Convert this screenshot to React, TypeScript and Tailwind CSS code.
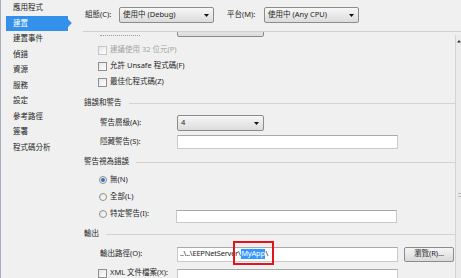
import React from "react";

const NAV = ["應用程式", "建置", "建置事件", "偵錯", "資源", "服務", "設定", "參考路徑", "簽署", "程式碼分析"];

const Arrow = () => (
    <svg width="5" height="3" viewBox="0 0 5 3" className="shrink-0">
        <path d="M0 0H5L2.5 3Z" fill="#111" />
    </svg>
);

const Select = ({ text, w }: { text: string; w: string }) => (
    <div className={`${w} flex h-[16px] items-center justify-between rounded-[2px] border border-[#8c8c8c] bg-linear-to-b from-[#f7f7f7] to-[#dcdcdc] pl-[3px] pr-[4px]`}>
        <span>{text}</span>
        <Arrow />
    </div>
);

const TextBox = ({ children, h = "h-[14px]" }: { children?: React.ReactNode; h?: string }) => (
    <div className={`${h} flex w-[221px] items-center border border-[#cacaca] border-t-[#a9a9a9] bg-white pl-[2px]`}>
        {children}
    </div>
);

const Check = ({ disabled }: { disabled?: boolean }) => (
    <span
        className={`inline-block h-[9px] w-[9px] shrink-0 border bg-linear-to-br from-[#e6e6e6] to-white ${
            disabled ? "border-[#c6c6c6]" : "border-[#8e8f8f]"
        }`}
    />
);

const Radio = ({ on }: { on?: boolean }) => (
    <span className="flex h-[8px] w-[8px] shrink-0 items-center justify-center rounded-full border border-[#8e8f8f] bg-linear-to-br from-[#e2e2e2] to-white">
        {on && <span className="h-[4px] w-[4px] rounded-full bg-[#2f6fbf]" />}
    </span>
);

const Section = ({ title, className }: { title: string; className: string }) => (
    <div className={`flex h-[16px] items-center gap-[7px] ${className}`}>
        <span>{title}</span>
        <div className="h-px flex-1 bg-[#d2d2d2]" />
    </div>
);

export default function App() {
    return (
        <div className="flex h-[278px] w-[461px] overflow-hidden border-l border-[#a9adc2] bg-[#f0f0f0] font-['Noto_Sans','Noto_Sans_CJK_TC',sans-serif] text-[7.5px] leading-none text-[#1e1e1e]">
            {/* sidebar */}
            <div className="flex w-[71px] shrink-0 flex-col">
                {NAV.map((item, i) =>
                    i === 1 ? (
                        <div key={item} className="flex h-[15.5px] items-center">
                            <div className="ml-[5px] flex h-[15px] w-[64px] items-center bg-[#3391ec] pl-[7px] text-white">{item}</div>
                            <svg width="4" height="8" viewBox="0 0 4 8">
                                <path d="M0 0L4 4L0 8Z" fill="#3391ec" />
                            </svg>
                        </div>
                    ) : (
                        <div key={item} className="flex h-[15.5px] items-center pl-[12px]">
                            {item}
                        </div>
                    )
                )}
            </div>

            {/* main */}
            <div className="flex min-w-0 flex-1 flex-col">
                <div className="ml-[11px] flex h-[32px] shrink-0 items-center border-b border-[#cfcfcf] pl-[2px] pb-[1px]">
                    <span className="w-[34px]">組態(C):</span>
                    <Select text="使用中 (Debug)" w="w-[95px]" />
                    <span className="ml-[13px] w-[37px]">平台(M):</span>
                    <Select text="使用中 (Any CPU)" w="w-[95px]" />
                </div>

                <div className="flex min-h-0 flex-1">
                    <div className="min-w-0 flex-1 overflow-hidden">
                        <div className="mt-[-11px] flex flex-col pl-[12px]">
                            {/* row scrolled almost out of view */}
                            <div className="flex h-[16px] items-center pl-[16px]">
                                <div className="w-[77px] pt-[13px]">
                                    <div className="w-[40px] border-b border-dotted border-[#9a9a9a]" />
                                </div>
                                <Select text="" w="w-[87px]" />
                            </div>

                            <div className="mt-[5px] flex h-[16px] items-center gap-[3px] pl-[14px] text-[#a3a3a3]">
                                <Check disabled />
                                <span>建議使用 32 位元(P)</span>
                            </div>
                            <div className="flex h-[16px] items-center gap-[3px] pl-[14px]">
                                <Check />
                                <span>允許 Unsafe 程式碼(F)</span>
                            </div>
                            <div className="flex h-[16px] items-center gap-[3px] pl-[14px]">
                                <Check />
                                <span>最佳化程式碼(Z)</span>
                            </div>

                            <Section title="錯誤和警告" className="mt-[5px]" />
                            <div className="mt-[4px] flex h-[16px] items-center pl-[16px]">
                                <span className="w-[77px]">警告層級(A):</span>
                                <Select text="4" w="w-[87px]" />
                            </div>
                            <div className="mt-[3px] flex h-[16px] items-center pl-[16px]">
                                <span className="w-[77px]">隱藏警告(S):</span>
                                <TextBox />
                            </div>

                            <Section title="警告視為錯誤" className="mt-[4px]" />
                            <div className="mt-[2px] flex h-[16px] items-center gap-[3px] pl-[15px]">
                                <Radio on />
                                <span>無(N)</span>
                            </div>
                            <div className="mt-[1px] flex h-[16px] items-center gap-[3px] pl-[15px]">
                                <Radio />
                                <span>全部(L)</span>
                            </div>
                            <div className="mt-[1px] flex h-[16px] items-center pl-[15px]">
                                <Radio />
                                <span className="ml-[3px] w-[66px]">特定警告(I):</span>
                                <div className="mt-[4px]">
                                    <TextBox h="h-[13px]" />
                                </div>
                            </div>

                            <Section title="輸出" className="mt-[4px]" />
                            <div className="mt-[4px] flex h-[16px] items-center pl-[16px]">
                                <span className="w-[77px]">輸出路徑(O):</span>
                                <TextBox h="h-[15px]">
                                    <span className="tracking-[-0.2px]">{"..\\..\\EEPNetServer\\"}</span>
                                    <span className="relative bg-[#3399ff] px-[0.5px] py-[1px] tracking-[-0.2px] text-white">
                                        MyApp
                                        <span className="absolute -top-[8px] -right-[9px] -bottom-[6px] -left-[8px] border-2 border-[#e3141b]" />
                                    </span>
                                    <span>{"\\"}</span>
                                </TextBox>
                                <div className="ml-[6px] flex h-[15px] w-[50px] items-center justify-center rounded-[2px] border border-[#8c8c8c] bg-linear-to-b from-[#f5f5f5] to-[#dadada]">
                                    瀏覽(R)...
                                </div>
                            </div>
                            <div className="mt-[3px] flex h-[16px] items-center pl-[14px]">
                                <Check />
                                <span className="ml-[3px] w-[67px]">XML 文件檔案(X):</span>
                                <div className="mt-[6px]">
                                    <TextBox />
                                </div>
                            </div>
                        </div>
                    </div>

                    {/* scrollbar, cut off at the window edge */}
                    <div className="mt-[3px] flex w-[6px] shrink-0 flex-col items-end border-l border-[#d4d4d4] bg-[#ebebeb]">
                        <svg width="4" height="4" viewBox="0 0 4 4" className="mt-[4px]">
                            <path d="M2 1L4 3.5H0Z" fill="#333" />
                        </svg>
                        <div className="mt-[150px] h-[4px] w-[3px] border-y border-[#bbbbbb]" />
                    </div>
                </div>
            </div>
        </div>
    );
}
